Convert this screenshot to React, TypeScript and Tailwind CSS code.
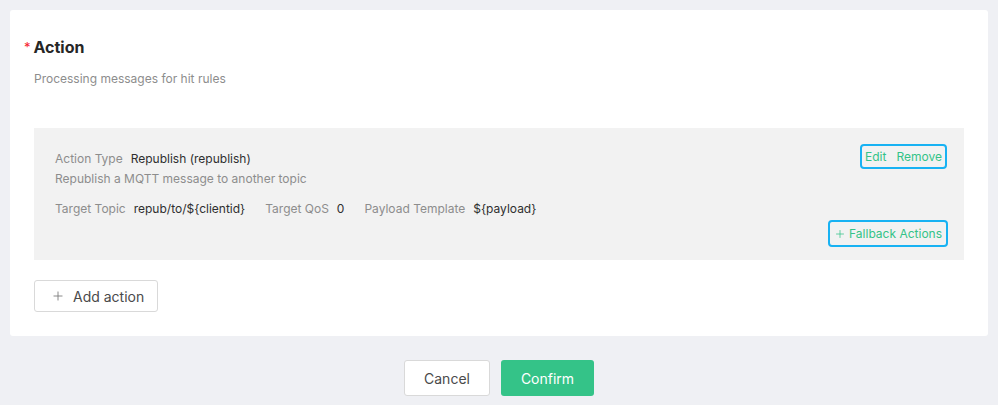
import { Plus } from "lucide-react";

const font = { fontFamily: "Inter, 'Noto Sans', sans-serif" };

function Field({ label, value }: { label: string; value: string }) {
  return (
    <span className="mr-5 inline-flex items-center">
      <span className="mr-2 text-[#8d8d8d]">{label}</span>
      <span className="text-[#2f2f2f]">{value}</span>
    </span>
  );
}

export default function App() {
  return (
    <div
      className="h-[405px] w-[998px] bg-[#eff0f4] px-[10px] pt-[10px]"
      style={font}
    >
      {/* Card */}
      <div className="h-[326px] rounded-[3px] bg-white pl-[24px] pr-[24px] pt-[27px]">
        <div className="flex items-center">
          <span className="-ml-[10px] mr-[3px] mt-[0px] text-[13px] leading-[13px] text-[#f5222d]">*</span>
          <h2 className="text-[16px] font-bold leading-[20px] text-[#262626]">Action</h2>
        </div>
        <p className="mt-[14px] text-[12px] leading-[16px] text-[#8d8d8d]">
          Processing messages for hit rules
        </p>

        {/* Action item */}
        <div className="mt-[41px] h-[132px] bg-[#f2f2f2] pl-[21px] pr-[17px] pt-[16px] text-[12px] leading-[16px]">
          <div className="flex items-center justify-between">
            <div className="pt-[5px]">
              <span className="mr-2 text-[#8d8d8d]">Action Type</span>
              <span className="text-[#2f2f2f]">Republish (republish)</span>
            </div>
            <div className="flex h-[25px] items-center gap-[10px] rounded-[4px] border-2 border-[#18b2f3] px-[3px] text-[#34c388]">
              <span>Edit</span>
              <span>Remove</span>
            </div>
          </div>
          <p className="mt-[2px] text-[#8d8d8d]">Republish a MQTT message to another topic</p>
          <div className="mt-[14px] flex">
            <Field label="Target Topic" value="repub/to/${clientid}" />
            <Field label="Target QoS" value="0" />
            <Field label="Payload Template" value="${payload}" />
          </div>
          <div className="mt-[3px] flex justify-end">
            <div className="-mr-[1px] flex h-[27px] items-center gap-[3px] rounded-[4px] border-2 border-[#18b2f3] px-[4px] text-[#34c388]">
              <Plus className="h-[12px] w-[12px]" strokeWidth={1.5} />
              <span>Fallback Actions</span>
            </div>
          </div>
        </div>

        <button className="mt-[20px] flex h-[32px] w-[124px] items-center gap-[8px] rounded-[3px] border border-[#d9d9d9] bg-white pl-[16px] text-[14px] text-[#4a4a4a]">
          <Plus className="h-[14px] w-[14px] text-[#7a7a7a]" strokeWidth={1.5} />
          Add action
        </button>
      </div>

      {/* Footer */}
      <div className="mt-[24px] flex justify-center gap-[11px]">
        <button className="h-[36px] w-[86px] rounded-[3px] border border-[#d9d9d9] bg-white text-[14px] text-[#4a4a4a]">
          Cancel
        </button>
        <button className="h-[36px] w-[93px] rounded-[3px] bg-[#34c388] text-[14px] text-white">
          Confirm
        </button>
      </div>
    </div>
  );
}
